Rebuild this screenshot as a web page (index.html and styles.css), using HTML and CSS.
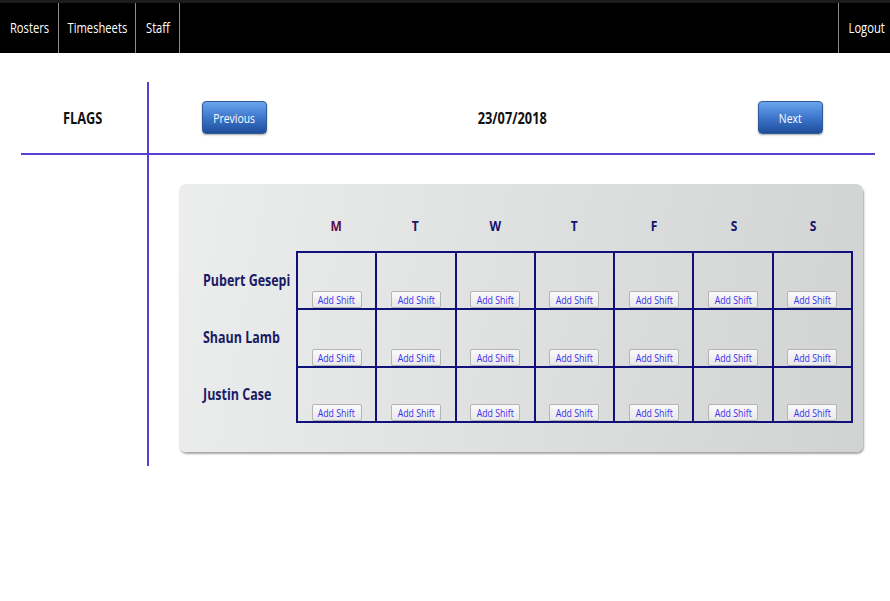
FILE: index.html
```html
<!DOCTYPE html>
<html>
<head>
<meta charset="utf-8">
<link rel="stylesheet" href="styles.css">
</head>
<body>
<nav class="topbar">
  <a class="nav-item"><span class="t">Rosters</span></a>
  <a class="nav-item"><span class="t">Timesheets</span></a>
  <a class="nav-item"><span class="t">Staff</span></a>
  <span class="spacer"></span>
  <a class="nav-item logout"><span class="t">Logout</span></a>
</nav>
<main class="layout">
  <div class="side-head"><span class="t">FLAGS</span></div>
  <div class="main-head">
    <button class="btn-blue"><span class="t">Previous</span></button>
    <div class="date"><span class="t">23/07/2018</span></div>
    <button class="btn-blue"><span class="t">Next</span></button>
  </div>
  <div class="side-body"></div>
  <div class="main-body">
    <section class="card">
      <div class="roster">
        <div class="corner"></div>
        <div class="day first"><span class="t">M</span></div>
        <div class="day"><span class="t">T</span></div>
        <div class="day"><span class="t">W</span></div>
        <div class="day"><span class="t">T</span></div>
        <div class="day"><span class="t">F</span></div>
        <div class="day"><span class="t">S</span></div>
        <div class="day"><span class="t">S</span></div>
      </div>
      <div class="rows">
        <div class="names">
          <div class="name r1"><span class="t">Pubert Gesepi</span></div>
          <div class="name r2"><span class="t">Shaun Lamb</span></div>
          <div class="name r3"><span class="t">Justin Case</span></div>
        </div>
        <div class="grid" id="grid"></div>
      </div>
    </section>
  </div>
</main>
<script src="app.js"></script>
</body>
</html>
```
FILE: app.js
```js
var g = document.getElementById('grid');
for (var r = 0; r < 3; r++) {
  for (var c = 0; c < 7; c++) {
    var cell = document.createElement('div');
    cell.className = 'cell row' + (r + 1);
    cell.innerHTML = '<button class="add"><span class="t">Add Shift</span></button>';
    g.appendChild(cell);
  }
}
```
FILE: styles.css
```css
* { box-sizing: border-box; }
body {
  margin: 0;
  font-family: "Open Sans", "DejaVu Sans", sans-serif;
  background: #fff;
  color: #111;
}
.t { display: inline-block; transform: scaleX(0.8); white-space: nowrap; }

.topbar {
  display: flex;
  height: 53px;
  background: #000;
  border-top: 3px solid #1c1c1c;
}
.nav-item {
  display: flex;
  align-items: center;
  justify-content: center;
  color: #fff;
  font-size: 14px;
  padding-bottom: 2px;
  border-right: 1px solid #8a8a8a;
}
.nav-item:nth-child(1) { width: 59px; }
.nav-item:nth-child(2) { width: 77px; }
.nav-item:nth-child(3) { width: 44px; }
.spacer { flex: 1; }
.logout { border-right: 0; border-left: 1px solid #8a8a8a; width: 52px; padding-left: 4px; }

.layout {
  display: grid;
  grid-template-columns: 128px 726px;
  grid-template-rows: 73px 311px;
  margin: 29px 0 0 21px;
}
.side-head {
  border-right: 2px solid #5a40d2;
  border-bottom: 2px solid #5a40d2;
  display: flex;
  align-items: center;
  justify-content: center;
  font-weight: 700;
  font-size: 16px;
  padding: 0 2px 0 0;
}
.main-head {
  border-bottom: 2px solid #5a40d2;
  display: flex;
  align-items: center;
  justify-content: space-between;
  padding: 0 52px 0 53px;
}
.date { font-weight: 700; font-size: 16px; }
.btn-blue {
  width: 65px;
  height: 33px;
  border: 1px solid #2e5a9a;
  border-radius: 4px;
  background: linear-gradient(#6aa4ec, #3a72c8 55%, #1f4e9a);
  box-shadow: 0 1px 2px rgba(0,0,0,.35);
  color: #fff;
  font-family: inherit;
  font-size: 13px;
  padding: 0;
}
.side-body { border-right: 2px solid #5a40d2; }
.main-body { padding: 29px 11px 0 30px; }

.card {
  width: 684px;
  height: 268px;
  border-radius: 7px;
  background: linear-gradient(100deg, #eceeed, #d0d3d2);
  box-shadow: 1px 2px 2px rgba(0,0,0,.35);
  padding: 30px 10px 0 22px;
}
.roster {
  display: grid;
  grid-template-columns: 95px repeat(7, 79.6px);
  height: 37px;
}
.day {
  display: flex;
  justify-content: center;
  font-weight: 700;
  color: #14146e;
  font-size: 15px;
  padding-top: 1px;
}
.day.first { color: #5a0f4a; }
.rows { display: flex; }
.names { width: 95px; }
.name {
  font-weight: 700;
  color: #1a1a66;
  font-size: 16px;
  display: flex;
  align-items: center;
  padding-left: 2px;
}
.name .t { transform-origin: left center; transform: scaleX(0.78); }
.name.r1 { height: 57px; }
.name.r2 { height: 58px; }
.name.r3 { height: 55px; }
.grid {
  display: grid;
  grid-template-columns: repeat(7, 1fr);
  grid-template-rows: 57px 58px 55px;
  width: 557px;
  border-top: 2px solid #10107a;
  border-left: 2px solid #10107a;
}
.cell {
  border-right: 2px solid #10107a;
  border-bottom: 2px solid #10107a;
  display: flex;
  align-items: flex-end;
  justify-content: center;
}
.add {
  width: 50px;
  height: 17px;
  padding: 0;
  border: 1px solid #b4b4b4;
  border-radius: 2px;
  background: linear-gradient(#fafafa, #e8e8e8);
  color: #3b2ef0;
  font-family: inherit;
  font-size: 11px;
  line-height: 15px;
}
```
